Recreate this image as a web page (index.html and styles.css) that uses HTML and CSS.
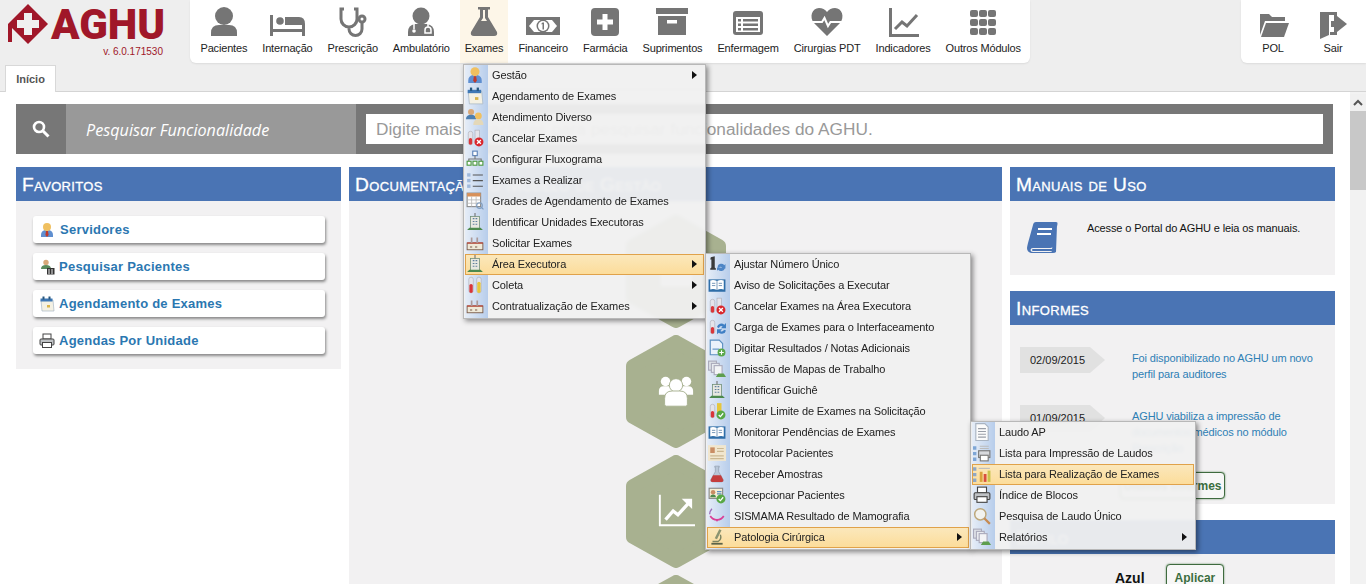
FILE: index.html
```html
<!DOCTYPE html>
<html lang="pt-BR">
<head>
<meta charset="utf-8">
<title>AGHU</title>
<link rel="stylesheet" href="styles.css">
</head>
<body>
<svg class="defs" width="0" height="0" aria-hidden="true">
  <defs>
    <symbol id="m-user" viewBox="0 0 16 16"><path d="M2 15v-2q0-4 4-5l2 1 2-1q4 1 4 5v2z" fill="#5f8fd0"/><circle cx="8" cy="5" r="4" fill="#f0c060"/><path d="M7 9h2l.6 4L8 15l-1.600-2z" fill="#c0392b"/></symbol>
    <symbol id="m-cal" viewBox="0 0 16 16"><path d="M2 4h12l1 11H3z" fill="#f4f1e4" stroke="#a9b7c6" stroke-width=".7"/><path d="M1.500 2.500h12v3h-12z" fill="#3f78b5"/><rect x="3.500" y="0.500" width="2" height="3" fill="#27577f"/><rect x="9.500" y="0.500" width="2" height="3" fill="#27577f"/><rect x="8" y="9" width="3" height="2.500" fill="#d9b44a"/></symbol>
    <symbol id="m-users" viewBox="0 0 16 16"><circle cx="4.500" cy="3.500" r="2.700" fill="#d8a878"/><path d="M0 10q0-4 4.500-4T9 10z" fill="#4d7fb0"/><circle cx="11" cy="7" r="3" fill="#f0c060"/><path d="M6.500 15q0-5 4.500-5t4.500 5z" fill="#e4d8b8"/></symbol>
    <symbol id="m-tubex" viewBox="0 0 16 16"><rect x="2" y="2" width="4" height="12" rx="2" fill="#e4e4ea" stroke="#a7a7b0" stroke-width=".5"/><rect x="2.500" y="8" width="3" height="6" rx="1.500" fill="#d9363a"/><rect x="8" y="1" width="4" height="9" fill="#e4e4ea" stroke="#a7a7b0" stroke-width=".5"/><circle cx="11.500" cy="11.500" r="4" fill="#d9262c"/><path d="M9.800 9.800l3.400 3.400m0-3.400l-3.400 3.400" stroke="#fff" stroke-width="1.200"/></symbol>
    <symbol id="m-flow" viewBox="0 0 16 16"><rect x="6" y="1" width="4" height="4" fill="#fff" stroke="#5c83b8"/><path d="M8 5v3M2.500 10V8h11v2" stroke="#777" fill="none"/><rect x="1" y="10" width="3.500" height="3.500" fill="#fff" stroke="#4d9a3f"/><rect x="6.200" y="10" width="3.500" height="3.500" fill="#fff" stroke="#4d9a3f"/><rect x="11.500" y="10" width="3.500" height="3.500" fill="#fff" stroke="#4d9a3f"/></symbol>
    <symbol id="m-list" viewBox="0 0 16 16"><rect x="1" y="2" width="3" height="3" fill="#9fb9dc"/><rect x="1" y="7" width="3" height="3" fill="#9fb9dc"/><rect x="1" y="12" width="3" height="3" fill="#9fb9dc"/><path d="M6 3.500h9M6 8.500h9M6 13.500h9" stroke="#555"/></symbol>
    <symbol id="m-grid" viewBox="0 0 16 16"><rect x="1" y="1" width="12" height="12" fill="#fff" stroke="#8a8a8a"/><rect x="1" y="1" width="12" height="3" fill="#d8915a"/><path d="M1 7h12M1 10h12M5 4v9M9 4v9" stroke="#b5b5b5" stroke-width=".7"/><circle cx="12" cy="12" r="2.500" fill="none" stroke="#7d9cc0"/><path d="M14 14l1.500 1.500" stroke="#7d9cc0"/></symbol>
    <symbol id="m-build" viewBox="0 0 16 16"><rect x="4" y="3" width="8" height="11" fill="#e8e8e0" stroke="#6f8f78" stroke-width=".7"/><path d="M6 5h1.500M8.500 5H10M6 7.500h1.500M8.500 7.500H10M6 10h1.500M8.500 10H10" stroke="#5f7f9f"/><path d="M8 0v3" stroke="#777"/><path d="M1 15l2-2h10l2 2z" fill="#4d8a4d"/></symbol>
    <symbol id="m-bench" viewBox="0 0 16 16"><rect x="1" y="8" width="14" height="6" fill="#efe9d8" stroke="#7a5a48" stroke-width=".8"/><path d="M1 8h14" stroke="#c0392b"/><path d="M5 3v5M10 3v5" stroke="#a99" stroke-width="1.500"/><path d="M3.500 11.500h2M8 11.500h2" stroke="#7a5a48"/></symbol>
    <symbol id="m-tubes" viewBox="0 0 16 16"><rect x="2.500" y="1" width="4" height="14" rx="2" fill="#e4e4ea" stroke="#a7a7b0" stroke-width=".5"/><rect x="3" y="7" width="3" height="8" rx="1.500" fill="#d9363a"/><rect x="9.500" y="1" width="4" height="14" rx="2" fill="#e4e4ea" stroke="#a7a7b0" stroke-width=".5"/><rect x="10" y="5" width="3" height="10" rx="1.500" fill="#e6c63c"/></symbol>
    <symbol id="m-one" viewBox="0 0 16 16"><path d="M2.500 2L6 1v10l1 1v1H2v-1l1-1V4H2z" fill="#3a3a3a"/><path d="M8.500 10a3.500 3.500 0 0 1 6-1l1-1v4h-4l1-1a2 2 0 0 0-3 .5zM15 12a3.500 3.500 0 0 1-6 1l-1 1v-3h3z" fill="#4f86c6"/></symbol>
    <symbol id="m-book" viewBox="0 0 16 16"><rect x="0.500" y="3" width="15" height="11" fill="#2f6ea8"/><path d="M2 4q3-1 6 .5Q11 3 14 4v8q-3-1-6 .5Q5 11 2 12z" fill="#fff"/><path d="M8 4.500v8M3.500 6.500h3M3.500 8.500h3M9.500 6.500h3M9.500 8.500h3" stroke="#577fa8" stroke-width=".7"/></symbol>
    <symbol id="m-tuber" viewBox="0 0 16 16"><rect x="2" y="2" width="4" height="12" rx="2" fill="#e4e4ea" stroke="#a7a7b0" stroke-width=".5"/><rect x="2.500" y="8" width="3" height="6" rx="1.500" fill="#d9363a"/><path d="M8 8a4 4 0 0 1 6.500-2L16 4.500V9h-4.500l1.500-1.500A2 2 0 0 0 9.800 9zM16 11a4 4 0 0 1-6.500 2L8 14.500V10h4.500L11 11.500a2 2 0 0 0 3.200-1z" fill="#3f7fc4"/></symbol>
    <symbol id="m-docadd" viewBox="0 0 16 16"><path d="M2 1h8l3 3v10H2z" fill="#eaf2fb" stroke="#5b8fc0"/><path d="M4 9h6" stroke="#5b8fc0"/><circle cx="12" cy="12" r="3.500" fill="#5aa84a"/><path d="M10 12h4M12 10v4" stroke="#fff"/></symbol>
    <symbol id="m-maps" viewBox="0 0 16 16"><rect x="0.500" y="1" width="7" height="8" fill="#dfe3e8" stroke="#aab"/><rect x="3" y="3" width="7" height="8" fill="#e8ebef" stroke="#aab"/><rect x="5.500" y="5" width="7" height="8" fill="#f3f4f6" stroke="#aab"/><path d="M7 15l2-3h5l2 3z" fill="#5e9e4e"/></symbol>
    <symbol id="m-tubec" viewBox="0 0 16 16"><rect x="2" y="2" width="4" height="12" rx="2" fill="#e4e4ea" stroke="#a7a7b0" stroke-width=".5"/><rect x="2.500" y="8" width="3" height="6" rx="1.500" fill="#d9363a"/><rect x="8" y="1" width="4" height="9" fill="#e6c63c"/><circle cx="11.500" cy="11.500" r="4" fill="#58a845"/><path d="M9.500 11.500l1.500 1.500 2.500-3" stroke="#fff" fill="none" stroke-width="1.100"/></symbol>
    <symbol id="m-paper" viewBox="0 0 16 16"><rect x="0" y="1" width="16" height="14" fill="#f1e6ce"/><rect x="2" y="3" width="4" height="5" fill="#c98d64"/><path d="M8 4h6M8 6.500h6M2 10.500h12M2 13h12" stroke="#cbb892"/></symbol>
    <symbol id="m-flask" viewBox="0 0 16 16"><path d="M6 1h4v1H9.500v4l4 7q.5 2-1.500 2H4q-2 0-1.500-2l4-7V2H6z" fill="#b9c7d8" stroke="#8593a3" stroke-width=".5"/><path d="M4.500 9h7l2 4q.5 2-1.500 2H4q-2 0-1.500-2z" fill="#c43d3d"/></symbol>
    <symbol id="m-cards" viewBox="0 0 16 16"><rect x="1" y="2" width="12" height="9" fill="#f5eed5" stroke="#888"/><circle cx="4.500" cy="5.500" r="2" fill="#c98d64"/><path d="M2 10q0-2.500 2.500-2.500T7 10z" fill="#4d8a4d"/><path d="M8 5h4M8 7h4" stroke="#5b8fc0"/><circle cx="11.500" cy="11.500" r="4" fill="#58a845"/><path d="M9.500 11.500l1.500 1.500 2.500-3" stroke="#fff" fill="none" stroke-width="1.100"/></symbol>
    <symbol id="m-curve" viewBox="0 0 16 16"><path d="M2 4a7 7 0 0 0 12 0" fill="none" stroke="#d93f97" stroke-width="1.500" transform="translate(0 4)"/><path d="M3.500 1.500q-2 2-2 5" fill="none" stroke="#9a6bb8" stroke-width="1.200"/><circle cx="8" cy="12" r=".8" fill="#d93f97"/></symbol>
    <symbol id="m-micro" viewBox="0 0 16 16"><path d="M10 1l2 1-4 8-2-1z" fill="#8c9470"/><path d="M11 6a5 5 0 0 1-2 6H4" fill="none" stroke="#7b8360" stroke-width="1.200"/><path d="M3 14h10" stroke="#5c6348" stroke-width="1.600"/></symbol>
    <symbol id="m-doc" viewBox="0 0 16 16"><path d="M2.500.500h8l3 3v12h-11z" fill="#fbfbfb" stroke="#a9b4c2"/><path d="M4.500 5h7M4.500 7.500h7M4.500 10h7M4.500 12.500h7" stroke="#9a9fa8"/></symbol>
    <symbol id="m-lprint" viewBox="0 0 16 16"><path d="M0 2h3v3H0zM0 7h3v3H0zM0 12h3v3H0z" fill="#7ea6d6"/><path d="M6 2h8M6 4h8" stroke="#bbb"/><rect x="5" y="6" width="10" height="6" fill="#d8dade" stroke="#777"/><rect x="6.500" y="10" width="7" height="5" fill="#fff" stroke="#777"/></symbol>
    <symbol id="m-lbars" viewBox="0 0 16 16"><path d="M0 2h3v3H0zM0 7h3v3H0zM0 12h3v3H0z" fill="#8fa7c5"/><path d="M5 3h10" stroke="#bbb"/><rect x="6" y="6" width="2.500" height="9" fill="#d9a23c"/><rect x="9.500" y="8" width="2.500" height="7" fill="#d94f3c"/><rect x="13" y="5" width="2.500" height="10" fill="#c9c24c"/></symbol>
    <symbol id="m-print" viewBox="0 0 16 16"><rect x="4" y="1" width="8" height="5" fill="#fff" stroke="#444"/><rect x="1" y="6" width="14" height="6" rx="1" fill="#bfc2c5" stroke="#444"/><rect x="3.500" y="9.500" width="9" height="5" fill="#fff" stroke="#444"/></symbol>
    <symbol id="m-search" viewBox="0 0 16 16"><circle cx="6.500" cy="6.500" r="5" fill="#f2f2ee" stroke="#bda77a" stroke-width="1.300"/><path d="M10 10l5 5" stroke="#c78b52" stroke-width="2"/></symbol>
    <symbol id="m-patient" viewBox="0 0 16 16"><circle cx="7" cy="3.500" r="2.700" fill="#d8a878"/><path d="M2 10q0-4 5-4t5 4z" fill="#5b8a5b"/><rect x="8" y="9" width="7.500" height="6.500" fill="#333"/><path d="M10 10v5M13 10v5" stroke="#eee"/></symbol>
  </defs>
</svg>

<header class="top">
  <div class="toprow">
    <div class="logo">
      <div class="logomark">
        <svg width="42" height="44" viewBox="0 0 42 44"><path d="M21 4L41 24 21 44 5 28v14H1V24z" fill="#a01729"/><path d="M17 13h8v7h7v8h-7v7h-8v-7h-7v-8h7z" fill="#f0f0f0"/></svg>
        <span class="logotext">AGHU</span>
      </div>
      <div class="version">v. 6.0.171530</div>
    </div>
    <nav class="modules">
      <a class="mod"><svg class="ico" viewBox="0 0 36 36"><circle cx="18" cy="13" r="9"/><path d="M5 33v-3q0-8 8-8h10q8 0 8 8v3z"/></svg><span>Pacientes</span></a>
      <a class="mod"><svg class="ico" viewBox="0 0 36 36"><path d="M1 12h3v21H1zM33 21h3v12h-3z"/><circle cx="11" cy="18" r="3.800"/><path d="M16 14h14q6 0 6 7v1H16z"/><path d="M4 26h29v3H4z"/></svg><span>Internação</span></a>
      <a class="mod"><svg class="ico line" viewBox="0 0 36 36"><path d="M9 6H6v10a8 8 0 0 0 16 0V6h-3M14 24v2a6.500 6.500 0 0 0 13 0v-7"/><circle cx="27" cy="16" r="3"/></svg><span>Prescrição</span></a>
      <a class="mod"><svg class="ico" viewBox="0 0 36 36"><circle cx="18" cy="13" r="8.500"/><path d="M5 33v-4q0-7 7-8h12q7 1 7 8v4z"/><path d="M11 21v5M25 21v3M25 24a3 3 0 0 0-3 3v3h6v-3a3 3 0 0 0-3-3" fill="none" stroke="#fff" stroke-width="1.500"/><circle cx="11" cy="28" r="1.800" fill="#fff"/></svg><span>Ambulatório</span></a>
      <a class="mod active"><svg class="ico" viewBox="0 0 36 36"><path d="M12 4h12v2.500h-2V14l9 15q1 4-3 4H8q-4 0-3-4l9-15V6.500h-2zM17 7v8l-2 3h6l-2-3V7z" fill-rule="evenodd"/></svg><span>Exames</span></a>
      <a class="mod"><svg class="ico" viewBox="0 0 36 36"><rect x="1" y="14" width="34" height="18"/><path d="M4 23l5-6h18l5 6-5 6H9z" fill="#fff"/><circle cx="18" cy="23" r="6.500"/><circle cx="18" cy="23" r="5" fill="#fff"/><path d="M17.500 19.500h1.500v7h-1.500v-5.500l-1 .5v-1z"/></svg><span>Financeiro</span></a>
      <a class="mod"><svg class="ico" viewBox="0 0 36 36"><rect x="4" y="5" width="28" height="28" rx="4"/><path d="M15.500 11h5v5.500H26v5h-5.500V27h-5v-5.500H10v-5h5.500z" fill="#fff"/></svg><span>Farmácia</span></a>
      <a class="mod"><svg class="ico" viewBox="0 0 36 36"><rect x="2" y="5" width="32" height="6"/><path d="M4 13h28v19H4z"/><rect x="13" y="17" width="10" height="3.500" fill="#fff"/></svg><span>Suprimentos</span></a>
      <a class="mod"><svg class="ico" viewBox="0 0 36 36"><rect x="3" y="8" width="30" height="24" rx="3"/><rect x="6" y="14" width="24" height="15" fill="#fff"/><path d="M8 16h3v2.500H8zM8 20.500h3V23H8zM8 25h3v2.500H8zM13 16h15v2.500H13zM13 20.500h15V23H13zM13 25h15v2.500H13z"/></svg><span>Enfermagem</span></a>
      <a class="mod"><svg class="ico" viewBox="0 0 36 36"><path d="M18 33L5 20C0 14 3 5 10 5q5 0 8 4 3-4 8-4c7 0 10 9 5 15z"/><path d="M3 19h10l2.500-4 3.500 8 2.500-4H33" fill="none" stroke="#fff" stroke-width="2"/></svg><span>Cirurgias PDT</span></a>
      <a class="mod"><svg class="ico" viewBox="0 0 36 36"><path d="M4 5h3v26h27v3H4z"/><path d="M10 26l7-7 5 4 10-11" fill="none" stroke="#757575" stroke-width="3"/></svg><span>Indicadores</span></a>
      <a class="mod"><svg class="ico" viewBox="0 0 36 36"><rect x="5" y="7" width="8" height="7" rx="2"/><rect x="14" y="7" width="8" height="7" rx="2"/><rect x="23" y="7" width="8" height="7" rx="2"/><rect x="5" y="16" width="8" height="7" rx="2"/><rect x="14" y="16" width="8" height="7" rx="2"/><rect x="23" y="16" width="8" height="7" rx="2"/><rect x="5" y="25" width="8" height="7" rx="2"/><rect x="14" y="25" width="8" height="7" rx="2"/><rect x="23" y="25" width="8" height="7" rx="2"/></svg><span>Outros Módulos</span></a>
    </nav>
    <nav class="modules right">
      <a class="mod wide"><svg class="ico" viewBox="0 0 36 36"><path d="M5 11v21l5-14h20v-4H17l-3-3z"/><path d="M11 20L6 34h23l5-14z"/></svg><span>POL</span></a>
      <a class="mod wide"><svg class="ico" viewBox="0 0 36 36"><path d="M5 9h17v9h-3v-6h-5v20l-9 4z"/><path d="M19 21v3h3v8h-7v-3h4v-8zM22 18v-5l10 8-10 8v-5h-6v-6z"/></svg><span>Sair</span></a>
    </nav>
  </div>
  <div class="tabs"><a class="tab">Início</a></div>
</header>

<div class="main">
  <main class="content">
    <section class="searchbar">
      <div class="searchicon"><svg width="18" height="18" viewBox="0 0 18 18"><circle cx="7" cy="7" r="5" fill="none" stroke="#fff" stroke-width="2.600"/><path d="M11 11l5.500 5.500" stroke="#fff" stroke-width="3"/></svg></div>
      <div class="searchlabel">Pesquisar Funcionalidade</div>
      <div class="searchfield"><input class="searchinput" type="text" placeholder="Digite mais caracteres para pesquisar funcionalidades do AGHU."></div>
    </section>

    <div class="columns">
      <section class="panel fav">
        <h2 class="ptitle">Favoritos</h2>
        <div class="favlist">
          <a class="favbtn"><svg class="mi"><use href="#m-user"/></svg><span class="ind">Servidores</span></a>
          <a class="favbtn"><svg class="mi"><use href="#m-patient"/></svg>Pesquisar Pacientes</a>
          <a class="favbtn"><svg class="mi"><use href="#m-cal"/></svg>Agendamento de Exames</a>
          <a class="favbtn"><svg class="mi"><use href="#m-print"/></svg>Agendas Por Unidade</a>
        </div>
      </section>

      <section class="panel doc">
        <h2 class="ptitle">Documentação do Modelo de Gestão</h2>
        <div class="hexes">
          <div class="hex"><svg class="hexbg" viewBox="0 0 100 113"><polygon points="50,7 93,31 93,82 50,106 7,82 7,31"/></svg><svg class="hexicon" viewBox="0 0 40 40"><path d="M4 4h32v32H4z" fill="#fff"/></svg></div>
          <div class="hex"><svg class="hexbg" viewBox="0 0 100 113"><polygon points="50,7 93,31 93,82 50,106 7,82 7,31"/></svg><svg class="hexicon" viewBox="0 0 40 40"><circle cx="9" cy="10" r="5" fill="#fff"/><circle cx="31" cy="10" r="5" fill="#fff"/><path d="M2 24v-4q0-5 5-5h26q5 0 5 5v4z" fill="#fff"/><circle cx="20" cy="14" r="7" fill="#fff" stroke="#a8b190"/><path d="M8 34v-6q0-8 8-8h8q8 0 8 8v6q0 2-2 2H10q-2 0-2-2z" fill="#fff" stroke="#a8b190"/></svg></div>
          <div class="hex"><svg class="hexbg" viewBox="0 0 100 113"><polygon points="50,7 93,31 93,82 50,106 7,82 7,31"/></svg><svg class="hexicon" viewBox="0 0 40 40"><path d="M2 3h2v31h36v2H2z" fill="#fff"/><path d="M9 29l8-9 5 4 11-12" fill="none" stroke="#fff" stroke-width="3.500"/><path d="M26 7h11v11z" fill="#fff"/></svg></div>
          <div class="hex"><svg class="hexbg" viewBox="0 0 100 113"><polygon points="50,7 93,31 93,82 50,106 7,82 7,31"/></svg></div>
        </div>
      </section>

      <div class="side">
        <section class="panel">
          <h2 class="ptitle">Manuais de Uso</h2>
          <div class="manual">
            <svg class="bookicon" viewBox="0 0 32 32"><path d="M10 1h20q2 0 1.500 2L27 25q-.5 2-2.500 2H7q-2.500 0-2.500 2t2.500 2h17q2 0 2-1H7q-1 0-1-1t1-1h19l5-24-1 27q-1 1-3 1H5q-4-1-4-5 0-1 1-5L7 4q.5-3 3-3z"/><path d="M12 8h14M11 13h14" stroke="#fff" stroke-width="2"/></svg>
            <p class="manualtext">Acesse o Portal do AGHU e leia os manuais.</p>
          </div>
        </section>
        <section class="panel">
          <h2 class="ptitle">Informes</h2>
          <div class="news">
            <div class="newsitem"><span class="date">02/09/2015</span><a class="newslink">Foi disponibilizado no AGHU um novo perfil para auditores</a></div>
            <div class="newsitem"><span class="date">01/09/2015</span><a class="newslink">AGHU viabiliza a impressão de documentos médicos no módulo Prescrição</a></div>
            <div class="newsbtn"><a class="btn wide">Últimos Informes</a></div>
          </div>
        </section>
        <section class="panel">
          <h2 class="ptitle">Estilo</h2>
          <div class="style"><b class="stylename">Azul</b><a class="btn">Aplicar</a></div>
        </section>
      </div>
    </div>
  </main>
  <div class="scrollbar"><div class="scrollup"><svg width="10" height="8" viewBox="0 0 10 8"><path d="M1 6l4-4 4 4" fill="none" stroke="#555" stroke-width="2"/></svg></div><div class="scrollthumb"></div></div>
</div>

<ul class="menu m1">
  <li class="mitem sub"><svg class="mi"><use href="#m-user"/></svg>Gestão</li>
  <li class="mitem"><svg class="mi"><use href="#m-cal"/></svg>Agendamento de Exames</li>
  <li class="mitem"><svg class="mi"><use href="#m-users"/></svg>Atendimento Diverso</li>
  <li class="mitem"><svg class="mi"><use href="#m-tubex"/></svg>Cancelar Exames</li>
  <li class="mitem"><svg class="mi"><use href="#m-flow"/></svg>Configurar Fluxograma</li>
  <li class="mitem"><svg class="mi"><use href="#m-list"/></svg>Exames a Realizar</li>
  <li class="mitem"><svg class="mi"><use href="#m-grid"/></svg>Grades de Agendamento de Exames</li>
  <li class="mitem"><svg class="mi"><use href="#m-build"/></svg>Identificar Unidades Executoras</li>
  <li class="mitem"><svg class="mi"><use href="#m-bench"/></svg>Solicitar Exames</li>
  <li class="mitem sub on"><svg class="mi"><use href="#m-build"/></svg>Área Executora</li>
  <li class="mitem sub"><svg class="mi"><use href="#m-tubes"/></svg>Coleta</li>
  <li class="mitem sub"><svg class="mi"><use href="#m-bench"/></svg>Contratualização de Exames</li>
</ul>
<ul class="menu m2">
  <li class="mitem"><svg class="mi"><use href="#m-one"/></svg>Ajustar Número Único</li>
  <li class="mitem"><svg class="mi"><use href="#m-book"/></svg>Aviso de Solicitações a Executar</li>
  <li class="mitem"><svg class="mi"><use href="#m-tubex"/></svg>Cancelar Exames na Área Executora</li>
  <li class="mitem"><svg class="mi"><use href="#m-tuber"/></svg>Carga de Exames para o Interfaceamento</li>
  <li class="mitem"><svg class="mi"><use href="#m-docadd"/></svg>Digitar Resultados / Notas Adicionais</li>
  <li class="mitem"><svg class="mi"><use href="#m-maps"/></svg>Emissão de Mapas de Trabalho</li>
  <li class="mitem"><svg class="mi"><use href="#m-build"/></svg>Identificar Guichê</li>
  <li class="mitem"><svg class="mi"><use href="#m-tubec"/></svg>Liberar Limite de Exames na Solicitação</li>
  <li class="mitem"><svg class="mi"><use href="#m-book"/></svg>Monitorar Pendências de Exames</li>
  <li class="mitem"><svg class="mi"><use href="#m-paper"/></svg>Protocolar Pacientes</li>
  <li class="mitem"><svg class="mi"><use href="#m-flask"/></svg>Receber Amostras</li>
  <li class="mitem"><svg class="mi"><use href="#m-cards"/></svg>Recepcionar Pacientes</li>
  <li class="mitem"><svg class="mi"><use href="#m-curve"/></svg>SISMAMA Resultado de Mamografia</li>
  <li class="mitem sub on"><svg class="mi"><use href="#m-micro"/></svg>Patologia Cirúrgica</li>
</ul>
<ul class="menu m3">
  <li class="mitem"><svg class="mi"><use href="#m-doc"/></svg>Laudo AP</li>
  <li class="mitem"><svg class="mi"><use href="#m-lprint"/></svg>Lista para Impressão de Laudos</li>
  <li class="mitem on"><svg class="mi"><use href="#m-lbars"/></svg>Lista para Realização de Exames</li>
  <li class="mitem"><svg class="mi"><use href="#m-print"/></svg>Índice de Blocos</li>
  <li class="mitem"><svg class="mi"><use href="#m-search"/></svg>Pesquisa de Laudo Único</li>
  <li class="mitem sub"><svg class="mi"><use href="#m-maps"/></svg>Relatórios</li>
</ul>
</body>
</html>
```

FILE: styles.css
```css
* { box-sizing: border-box; }
html, body { margin: 0; height: 584px; overflow: hidden; }
body { font-family: "Liberation Sans", Arial, sans-serif; font-size: 11px; color: #222; background: #fff; }
.defs { position: absolute; }

.top { height: 92px; background: #eee; border-bottom: 1px solid #d4d4d4; }
.toprow { display: flex; height: 63px; }
.logo { width: 190px; flex: none; padding: 0 27px 0 7px; }
.logomark { display: flex; height: 46px; align-items: flex-start; }
.logomark svg { flex: none; }
.logotext { font-family: Roboto, sans-serif; font-weight: 900; font-size: 42px; line-height: 50px; color: #a01729; margin-left: 2px; }
.version { text-align: right; font-size: 10px; line-height: 12px; color: #a01729; }

.modules { display: flex; background: #fff; border-radius: 0 0 6px 6px; padding: 0 2px 0 3px; box-shadow: 0 1px 2px rgba(0,0,0,.08); }
.modules.right { margin-left: auto; width: 125px; padding: 0 2px; border-radius: 0 0 0 6px; }
.mod { display: flex; flex-direction: column; align-items: center; padding: 3px 5px 0; margin: 0 2.500px; color: #222; white-space: nowrap; letter-spacing: -.17px; }
.mod.active { background: #fdf6e8; }
.mod.wide { width: 60px; margin: 0; }
.mod span { margin-top: 3px; line-height: 13px; }
.ico { width: 36px; height: 36px; fill: #757575; flex: none; }
.ico.line { fill: none; stroke: #757575; stroke-width: 3; }

.tabs { padding: 2px 0 0 5px; height: 28px; }
.tab { display: block; width: 51px; height: 27px; background: #fff; border: 1px solid #d8d8d8; border-bottom: 0; text-align: center; line-height: 27px; font-weight: bold; color: #555; }

.main { display: flex; height: 492px; overflow: hidden; }
.content { flex: 1; min-width: 0; padding: 12px 15px 0 16px; }
.scrollbar { width: 16px; padding-top: 2px; background: #f2f2f2; flex: none; }
.scrollup { height: 17px; background: #f0f0f0; display: flex; align-items: center; justify-content: center; }
.scrollthumb { height: 79px; background: #c8c8c8; }

.searchbar { display: flex; height: 50px; margin-right: 2px; background: #777; }
.searchicon { width: 50px; flex: none; display: flex; align-items: center; justify-content: center; }
.searchlabel { width: 290px; flex: none; background: #999; color: #fff; font-family: "Open Sans", sans-serif; font-style: italic; font-size: 16.200px; line-height: 52px; padding-left: 20px; white-space: nowrap; }
.searchfield { flex: 1; padding: 10px; }
.searchinput { display: block; width: 100%; height: 30px; border: 0; padding: 0 10px; font-family: "Liberation Sans", sans-serif; font-size: 17.250px; background: #fff; outline: 0; }
.searchinput::placeholder { color: #999; opacity: 1; }

.columns { display: grid; grid-template-columns: 325px 653px 325px; column-gap: 8px; margin-top: 13px; }
.panel { background: #f2f1f2; }
.fav { align-self: start; }
.ptitle { margin: 0; height: 34px; padding-left: 6px; background: #4a74b4; color: #fff; font-size: 19.200px; line-height: 35px; font-weight: normal; font-variant: small-caps; letter-spacing: .35px; white-space: nowrap; -webkit-text-stroke: .3px #fff; }

.favlist { display: flex; flex-direction: column; gap: 10px; padding: 15px 16px 15px 17px; }
.favbtn { display: flex; align-items: center; gap: 4px; height: 27px; padding-left: 6px; background: #fff; border-radius: 3px; box-shadow: 1px 2px 3px #888; color: #2b77b1; font-size: 13px; font-weight: bold; letter-spacing: .24px; }
.ind { margin-left: 1px; }
.mi { width: 16px; height: 16px; flex: none; }

.doc { height: 600px; overflow: hidden; }
.hexes { display: flex; flex-direction: column; align-items: center; gap: 7px; padding-top: 14px; }
.hex { position: relative; width: 100px; height: 113px; flex: none; }
.hexbg { display: block; width: 100px; height: 113px; fill: #a8b190; stroke: #a8b190; stroke-width: 14; stroke-linejoin: round; }
.hexicon { position: absolute; left: 31px; top: 37px; width: 38px; height: 38px; }

.side { display: flex; flex-direction: column; gap: 16px; }
.manual { display: flex; height: 74px; padding: 20px 0 0 16px; }
.bookicon { width: 32px; height: 32px; flex: none; fill: #4a74b4; }
.manualtext { margin: 0 0 0 29px; line-height: 14px; letter-spacing: -.12px; color: #111; }

.news { height: 179px; padding: 22px 10px 0; }
.newsitem { display: flex; gap: 27px; margin-bottom: 16px; min-height: 42px; }
.date { flex: none; width: 85px; height: 26px; padding-left: 10px; line-height: 27px; background: #e1e1e1; clip-path: polygon(0 0, 70px 0, 100% 50%, 70px 100%, 0 100%); }
.newslink { padding-top: 3px; line-height: 16px; color: #2e80b5; letter-spacing: -.13px; }
.newsbtn { display: flex; justify-content: flex-end; padding-right: 100px; }
.btn { display: inline-block; height: 27px; padding: 0 8px; line-height: 26px; background: #f7f7f7; border: 1px solid #3f6b3f; border-radius: 4px; box-shadow: 0 0 2px #5c8a5c; color: #3b6e3f; font-size: 12px; font-weight: bold; white-space: nowrap; }
.btn.wide { width: 105px; padding: 0; text-align: center; }
.style { display: flex; align-items: center; gap: 21px; padding: 10px 0 0 105px; }
.stylename { font-size: 14px; color: #111; }

.menu { position: absolute; margin: 0; padding: 0 1px 1px; list-style: none; background: rgba(240,240,240,.95); border: 1px solid #b8b8b8; box-shadow: 2px 2px 5px rgba(0,0,0,.45); backdrop-filter: blur(1.500px); }
.menu::before { content: ""; position: absolute; left: 1px; top: 0; bottom: 0; width: 23px; background: linear-gradient(90deg, #e6edf7, #b7cdeb); }
.m1 { left: 463px; top: 64px; width: 243px; z-index: 10; }
.m2 { left: 705px; top: 253px; width: 266px; z-index: 11; }
.m3 { left: 970px; top: 421px; width: 226px; z-index: 12; }
.mitem { position: relative; display: flex; align-items: center; height: 21px; padding: 0 0 1px 1px; white-space: nowrap; color: #222; letter-spacing: -.12px; }
.mitem .mi { width: 18px; height: 18px; margin-right: 8px; }
.mitem.on { background: linear-gradient(#fbe8bd, #fcdc99); box-shadow: inset 0 0 0 1px #e0a24a; }
.mitem.sub::after { content: ""; position: absolute; right: 7px; top: 6px; border-left: 5px solid #111; border-top: 4px solid transparent; border-bottom: 4px solid transparent; }
```
